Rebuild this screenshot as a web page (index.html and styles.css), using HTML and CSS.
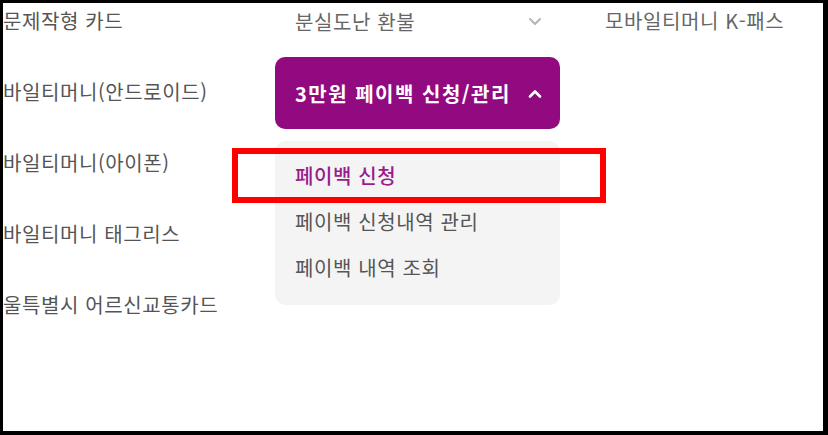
FILE: index.html
```html
<!DOCTYPE html>
<html lang="ko">
<head>
    <meta charset="UTF-8">
    <meta name="viewport" content="width=device-width, initial-scale=1.0">
    <title>티머니 카드 메뉴</title>
    <link rel="stylesheet" href="styles.css">
</head>
<body>
    <div class="frame">
        <div class="menu">
            <ul class="col col-left">
                <li>문제작형 카드</li>
                <li>바일티머니(안드로이드)</li>
                <li>바일티머니(아이폰)</li>
                <li>바일티머니 태그리스</li>
                <li>울특별시 어르신교통카드</li>
            </ul>

            <div class="col col-mid">
                <div class="group">
                    <span>분실도난 환불</span>
                    <svg class="chev" width="14" height="9" viewBox="0 0 14 9">
                        <path d="M2 2 L7 7 L12 2" fill="none" stroke="#b5b5b5" stroke-width="2" stroke-linecap="round" stroke-linejoin="round"/>
                    </svg>
                </div>
                <div class="group group-open">
                    <span>3만원 페이백 신청/관리</span>
                    <svg class="chev" width="14" height="9" viewBox="0 0 14 9">
                        <path d="M2 7.5 L7 2.5 L12 7.5" fill="none" stroke="#fff" stroke-width="2.6" stroke-linecap="round" stroke-linejoin="round"/>
                    </svg>
                </div>
                <ul class="submenu">
                    <li class="active">페이백 신청<span class="mark"></span></li>
                    <li>페이백 신청내역 관리</li>
                    <li>페이백 내역 조회</li>
                </ul>
            </div>

            <ul class="col col-right">
                <li>모바일티머니 K-패스</li>
            </ul>
        </div>
    </div>
</body>
</html>
```

FILE: styles.css
```css
html, body {
    margin: 0;
    padding: 0;
    height: 100%;
}
body {
    background-color: #000;
    font-family: "Noto Sans CJK KR", "Noto Sans", sans-serif;
    color: #555;
    padding: 3px 5px 4px 3px;
    box-sizing: border-box;
}
.frame {
    background-color: #fff;
    height: 100%;
    overflow: hidden;
}
.menu {
    display: flex;
    align-items: flex-start;
    margin-top: -18px;
}
ul {
    list-style: none;
    margin: 0;
    padding: 0;
}
.col {
    font-size: 20px;
    letter-spacing: 0.6px;
}
.col-left {
    width: 272px;
}
.col-left li {
    height: 71px;
    line-height: 71px;
    white-space: nowrap;
}
.col-mid {
    width: 285px;
}
.group {
    height: 72px;
    display: flex;
    align-items: center;
    justify-content: space-between;
    padding: 0 18px 0 20px;
    color: #666;
}
.group-open {
    background-color: #920a80;
    color: #fff;
    font-weight: bold;
    letter-spacing: 1.5px;
    border-radius: 10px;
}
.submenu {
    position: relative;
    margin-top: 12px;
    padding: 12px 0 14px 20px;
    background-color: #f4f4f4;
    border-radius: 10px;
}
.submenu li {
    height: 46px;
    line-height: 46px;
}
.submenu li.active {
    color: #9a1c8b;
    font-weight: 500;
}
.mark {
    position: absolute;
    left: -43px;
    top: 7px;
    width: 374px;
    height: 55px;
    border: 6px solid #ff0000;
    box-sizing: border-box;
}
.col-right {
    padding-left: 45px;
}
.col-right li {
    height: 72px;
    line-height: 72px;
    color: #666;
    white-space: nowrap;
}
```
